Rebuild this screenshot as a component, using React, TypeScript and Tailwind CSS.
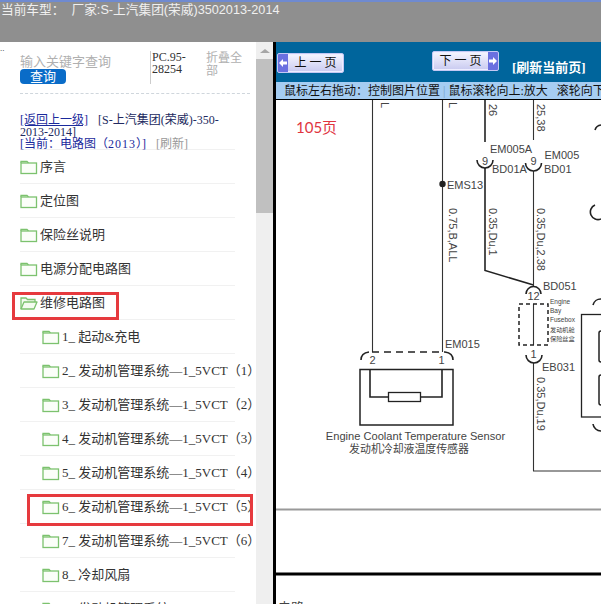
import React from 'react';

const SERIF = 'font-["Liberation_Serif","Noto_Sans_CJK_SC",serif]';

const FolderIcon = ({ open = false }: { open?: boolean }) => (
  <svg width="18" height="16" viewBox="0 0 18 16" className="shrink-0">
    {open ? (
      <>
        <path d="M1 14V3h5l1.5 1.5H15V7" fill="#f4fbf0" stroke="#7cc26e" strokeWidth="1.3" />
        <path d="M1 14l3-7h13l-3 7z" fill="#f4fbf0" stroke="#7cc26e" strokeWidth="1.3" strokeLinejoin="round" />
      </>
    ) : (
      <>
        <path d="M1 4V2.5h6L8.5 4" fill="none" stroke="#7cc26e" strokeWidth="1.3" />
        <rect x="1" y="4" width="15.5" height="10.5" fill="#fbfef9" stroke="#7cc26e" strokeWidth="1.3" />
      </>
    )}
  </svg>
);

const TopRows = ['序言', '定位图', '保险丝说明', '电源分配电路图'];
const ChildRows = [
  '1_ 起动&充电',
  '2_ 发动机管理系统—1_5VCT（1）',
  '3_ 发动机管理系统—1_5VCT（2）',
  '4_ 发动机管理系统—1_5VCT（3）',
  '5_ 发动机管理系统—1_5VCT（4）',
  '6_ 发动机管理系统—1_5VCT（5）',
  '7_ 发动机管理系统—1_5VCT（6）',
  '8_ 冷却风扇',
  '9_ 发动机管理系统—1_5VCT',
];

const Row = ({ label, child = false, open = false }: { label: string; child?: boolean; open?: boolean }) => (
  <div className={`flex h-[34px] w-[215px] shrink-0 items-center border-b border-[#f1f1f1] pt-[1px] ${child ? 'pl-[22px]' : ''}`}>
    <FolderIcon open={open} />
    <span className={`ml-[2px] whitespace-nowrap text-[13px] text-[#333] ${SERIF}`}>{label}</span>
  </div>
);

const PageButton = ({ label, next = false }: { label: string; next?: boolean }) => (
  <div className="flex h-[20px] w-[67px] items-stretch overflow-hidden rounded-[2px] border border-[#c4c8f4] bg-gradient-to-b from-[#f6f6ff] to-[#c9caf0] shadow-[inset_0_0_0_1px_#eef]">
    {!next && (
      <span className="flex w-[10px] items-center justify-center bg-[#6a70e0]">
        <svg width="8" height="8" viewBox="0 0 8 8"><path d="M0 4l4-4v2.5h4v3H4V8z" fill="#fff" /></svg>
      </span>
    )}
    <span className={`flex-1 text-center text-[12px] leading-[18px] text-[#111] ${SERIF}`}>{label}</span>
    {next && (
      <span className="flex w-[10px] items-center justify-center bg-[#6a70e0]">
        <svg width="8" height="8" viewBox="0 0 8 8"><path d="M8 4L4 0v2.5H0v3h4V8z" fill="#fff" /></svg>
      </span>
    )}
  </div>
);

const Diagram = () => {
  const wire = { stroke: '#333', strokeWidth: 1.1, fill: 'none' };
  const thick = { stroke: '#222', strokeWidth: 1.6, fill: 'none' };
  const label = { fontFamily: 'Liberation Sans, Noto Sans CJK SC, sans-serif', fill: '#444' };
  const Vert = ({ x, y, t }: { x: number; y: number; t: string }) => (
    <text x={x} y={y} fontSize="11" {...label} transform={`rotate(90 ${x} ${y})`}>{t}</text>
  );
  return (
    <svg width="325" height="504" viewBox="276 100 325 504" className="block">
      <line x1="372.5" y1="100" x2="372.5" y2="352" {...wire} />
      <line x1="442.5" y1="100" x2="442.5" y2="352" {...wire} />
      <circle cx="442.5" cy="184" r="3.2" fill="#222" />
      <path d="M485 100V142" {...thick} />
      <path d="M485 168V270.5L533.5 285" {...thick} />
      <path d="M533.5 100V140M533.5 171V286" {...wire} />
      <path d="M533.5 304V345M533.5 363V471H601" {...wire} />
      <path d="M477 160a8 8 0 0 0 16 0" {...thick} />
      <path d="M525.5 163a8 8 0 0 0 16 0" {...thick} />
      <path d="M526 294a7.5 7.5 0 0 1 15 0" {...thick} />
      <path d="M526 355a8 8 0 0 0 16 0" {...thick} />
      <rect x="519" y="304" width="29" height="41" stroke="#222" strokeWidth="1.5" strokeDasharray="4 3" fill="none" />
      <path d="M361 360q0-7 8-8M445 352q8 1 8 8" {...thick} />
      <line x1="372" y1="352" x2="445" y2="352" stroke="#222" strokeWidth="1.5" strokeDasharray="7 5" />
      <rect x="360" y="369.5" width="93" height="55.5" stroke="#222" strokeWidth="1.5" fill="none" />
      <path d="M370 370V397H388M420 397H442V370" {...thick} />
      <rect x="388.5" y="392.5" width="32" height="9" stroke="#222" strokeWidth="1.3" fill="none" />
      <rect x="581.5" y="314.5" width="30" height="102.5" stroke="#222" strokeWidth="1.3" fill="none" />
      <rect x="599" y="331" width="8" height="31" rx="2" stroke="#222" strokeWidth="1.5" fill="none" />
      <rect x="599" y="375" width="8" height="30" rx="2" stroke="#222" strokeWidth="1.5" fill="none" />
      <path d="M593 305a8 8 0 0 1 8-6M593 424a8 8 0 0 0 8 7M595 205a7 7 0 0 0 6 14M595 130a7 7 0 0 1 6-5" {...thick} />
      <line x1="276" y1="509.5" x2="601" y2="509.5" stroke="#999" strokeWidth="2" />
      <line x1="276" y1="574" x2="601" y2="574" stroke="#000" strokeWidth="3" />

      <text x="296" y="133" fontSize="15" fontFamily="Lato, Noto Sans CJK SC, sans-serif" fill="#e0353f">105页</text>
      <Vert x={381} y={102} t="L" />
      <Vert x={449} y={102} t="L" />
      <Vert x={489} y={104} t="26" />
      <Vert x={537} y={104} t="25,38" />
      <Vert x={449} y={208} t="0.75,B,ALL" />
      <Vert x={489} y={208} t="0.35,Du,1" />
      <Vert x={537} y={208} t="0.35,Du,2.38" />
      <Vert x={537} y={377} t="0.35,Du,19" />
      <text x="490" y="153" fontSize="11" {...label}>EM005A</text>
      <text x="544.5" y="159" fontSize="11" {...label}>EM005</text>
      <text x="492" y="173" fontSize="11" {...label}>BD01A</text>
      <text x="544" y="173" fontSize="11" {...label}>BD01</text>
      <text x="447" y="189" fontSize="11" {...label}>EMS13</text>
      <text x="485" y="165" fontSize="11" textAnchor="middle" {...label}>9</text>
      <text x="533.5" y="165" fontSize="11" textAnchor="middle" {...label}>9</text>
      <text x="543" y="290" fontSize="11" {...label}>BD051</text>
      <text x="533.5" y="300" fontSize="11" textAnchor="middle" {...label}>12</text>
      <text x="550" y="304" fontSize="6.5" {...label}>Engine</text>
      <text x="550" y="313" fontSize="6.5" {...label}>Bay</text>
      <text x="550" y="322" fontSize="6.5" {...label}>Fusebox</text>
      <text x="550" y="331.5" fontSize="6.2" {...label}>发动机舱</text>
      <text x="550" y="340.5" fontSize="6.2" {...label}>保险丝盒</text>
      <text x="533.5" y="358" fontSize="11" textAnchor="middle" {...label}>1</text>
      <text x="542" y="371" fontSize="11" {...label}>EB031</text>
      <text x="445" y="348" fontSize="11" {...label}>EM015</text>
      <text x="372.5" y="364" fontSize="11" textAnchor="middle" {...label}>2</text>
      <text x="441.5" y="364" fontSize="11" textAnchor="middle" {...label}>1</text>
      <text x="415.5" y="440" fontSize="11.1" textAnchor="middle" {...label}>Engine Coolant Temperature Sensor</text>
      <text x="409" y="452.5" fontSize="10.9" textAnchor="middle" {...label}>发动机冷却液温度传感器</text>
      <text x="278" y="612" fontSize="13" {...label}>电路</text>
    </svg>
  );
};

const App: React.FC = () => {
  return (
    <div className="flex h-[604px] w-[601px] flex-col overflow-hidden bg-white">
      {/* top bar */}
      <div className="h-[42px] shrink-0 overflow-hidden whitespace-pre border-t-2 border-[#6f8ad0] bg-[#8f8f8f] pl-[1px] font-['Liberation_Sans','Noto_Sans_CJK_SC',sans-serif] text-[12.7px] leading-[17px] text-[#f0f0f0]">
        当前车型：  厂家:S-上汽集团(荣威)3502013-2014
      </div>

      <div className="flex min-h-0 flex-1">
        {/* left tree */}
        <div className="relative h-full w-[256px] shrink-0 overflow-hidden pl-[20px]">
          <div className={`absolute left-0 top-[2px] text-[9px] leading-[9px] text-[#333] ${SERIF}`}>..</div>
          <div className="flex h-[52px] w-[230px] items-start border-b border-dashed border-[#cfd6dc] pt-[9px]">
            <div className="w-[130px] shrink-0">
              <div className={`mt-[3px] h-[15px] text-[13px] leading-[16px] text-[#b0b0b0] ${SERIF}`}>输入关键字查询</div>
              <div className={`h-[15px] w-[46px] rounded-[4px] bg-[#0a6cc8] text-center text-[13px] leading-[15px] text-white ${SERIF}`}>查询</div>
            </div>
            <div className={`h-[33px] w-[56px] shrink-0 border-l border-[#ccc] pl-[1px] text-[12px] leading-[12px] text-[#333] ${SERIF}`}>
              PC.95-<br />28254
            </div>
            <div className={`mt-[1px] w-[38px] text-[12px] leading-[13px] text-[#b0b0b0] ${SERIF}`}>折叠全部</div>
          </div>

          <div className={`h-[56px] w-[215px] border-b border-[#f1f1f1] pt-[20px] text-[12px] leading-[12px] ${SERIF}`}>
            <span className="text-[#1a2a9c] underline">[返回上一级]</span>
            <span className="ml-[10px] text-[#222a60]">[S-上汽集团(荣威)-350-2013-2014]</span>
            <br />
            <span className="text-[#1a2a9c]">[当前：电路图（<span className="tracking-[1px]">2013</span>）]</span>
            <span className="ml-[10px] text-[#999]">[刷新]</span>
          </div>

          {TopRows.map((t) => (
            <Row key={t} label={t} />
          ))}
          <Row label="维修电路图" open />
          {ChildRows.map((t) => (
            <Row key={t} label={t} child />
          ))}

          <div className="absolute left-[12px] top-[250px] h-[28px] w-[107px] border-[3px] border-[#e63a3e]" />
          <div className="absolute left-[27px] top-[452px] h-[32px] w-[226px] border-[3px] border-[#e63a3e]" />
        </div>

        {/* scrollbar */}
        <div className="flex h-full w-[17px] shrink-0 flex-col bg-[#efefef]">
          <div className="flex h-[17px] shrink-0 items-center justify-center">
            <div className="h-0 w-0 border-x-[5px] border-b-[4px] border-x-transparent border-b-[#a6a6a6]" />
          </div>
          <div className="h-[154px] w-full bg-[#c0c0c0]" />
        </div>

        {/* right viewer */}
        <div className="min-w-0 flex-1 border-l-[3px] border-black">
          <div className="flex h-[40px] items-start bg-[#00659c] pl-[1px]">
            <div className="mt-[11px]"><PageButton label="上 一 页" /></div>
            <div className="ml-[88px] mt-[9px]"><PageButton label="下 一 页" next /></div>
            <div className={`ml-[13px] mt-[18px] whitespace-nowrap text-[13px] font-bold leading-[16px] text-white ${SERIF}`}>[刷新当前页]</div>
          </div>
          <div className={`h-[18px] overflow-hidden whitespace-pre border-b border-black bg-[#a6cdf2] pl-[8px] text-[12px] leading-[18px] text-[#111] ${SERIF}`}>
            鼠标左右拖动：控制图片位置 <span className="text-[#7aa0c8]">|</span> 鼠标滚轮向上:放大   滚轮向下:缩小
          </div>
          <Diagram />
        </div>
      </div>
    </div>
  );
};

export default App;
